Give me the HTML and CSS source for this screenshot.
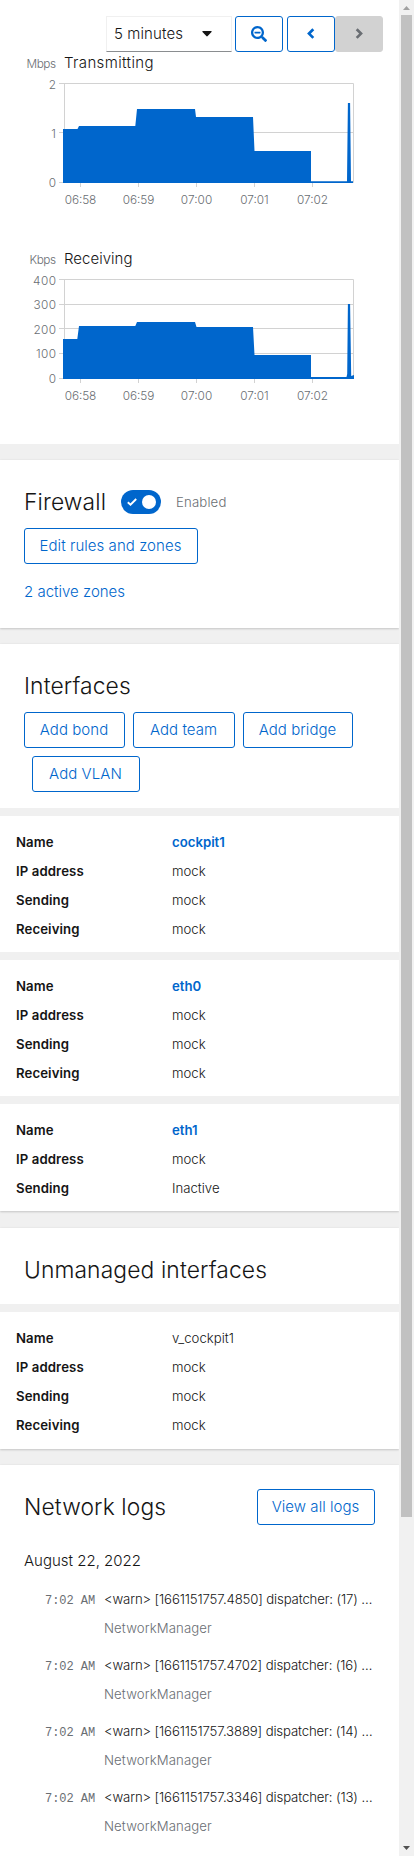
FILE: index.html
```
<!DOCTYPE html>
<html lang="en">
<head>
<meta charset="utf-8">
<title>Networking</title>
<link rel="stylesheet" href="styles.css">
</head>
<body>
<div class="page">
<main class="content">
  <section class="graphs">
    <div class="toolbar">
      <div class="select"><span>5 minutes</span><svg width="10" height="6" viewBox="0 0 10 6"><path d="M1 0h8q1.300 0 .5 1L5.700 5q-.7.8-1.400 0L.5 1Q-.3 0 1 0z" fill="#151515"/></svg></div>
      <button class="btn icon zoom"><svg width="16" height="16" viewBox="0 0 512 512"><path fill="#06c" d="M304 192v32c0 6.600-5.400 12-12 12H124c-6.600 0-12-5.400-12-12v-32c0-6.600 5.400-12 12-12h168c6.600 0 12 5.400 12 12zm201 284.700L476.700 505c-9.400 9.400-24.600 9.400-33.900 0L343 405.300c-4.500-4.500-7-10.600-7-17V372c-35.300 27.600-79.700 44-128 44C93.100 416 0 322.900 0 208S93.100 0 208 0s208 93.100 208 208c0 48.300-16.400 92.700-44 128h16.300c6.400 0 12.500 2.500 17 7l99.700 99.700c9.300 9.400 9.300 24.600 0 34zM344 208c0-75.200-60.800-136-136-136S72 132.800 72 208s60.800 136 136 136 136-60.800 136-136z"/></svg></button>
      <button class="btn icon prev"><svg width="8" height="12" viewBox="0 0 8 12"><path d="M6.300 1.300L2 5.600l4.300 4.300" fill="none" stroke="#06c" stroke-width="2.700"/></svg></button>
      <button class="btn icon off"><svg width="8" height="12" viewBox="0 0 8 12"><path d="M1.700 1.300L6 5.600L1.700 9.900" fill="none" stroke="#6a6e73" stroke-width="2.700"/></svg></button>
    </div>
    <svg class="chart" width="399" height="196" viewBox="0 52 399 196">
      <path class="grid" d="M59 83.500H353.500V182.500M59 132.500H353.500M59 182.500H353.500M64.500 83V183M80.500 183v4M138.500 183v4M196.500 183v4M254.500 183v4M312.500 183v4"/>
      <path class="area" d="M63 183V129H77.500L79 126H135.300L137 109H195L196 117H253L254.500 151H311V181.300H347L347.900 103H350.100L351 181.300H353V183z"/>
      <text class="unit" x="56" y="68" textLength="29.500">Mbps</text>
      <text class="name" x="64" y="68" textLength="89.500">Transmitting</text>
      <g class="ylab"><text x="56" y="89">2</text><text x="56" y="138">1</text><text x="56" y="187">0</text></g>
      <g class="xlab"><text x="80.500" y="204" textLength="31.500">06:58</text><text x="138.500" y="204" textLength="31.500">06:59</text><text x="196.500" y="204" textLength="31.500">07:00</text><text x="254.500" y="204" textLength="28.500">07:01</text><text x="312.500" y="204" textLength="31">07:02</text></g>
    </svg>
    <svg class="chart" width="399" height="196" viewBox="0 248 399 196">
      <path class="grid" d="M59 279.500H353.500V378.500M59 304.500H353.500M59 328.500H353.500M59 353.500H353.500M59 378.500H353.500M64.500 279V379M80.500 379v4M138.500 379v4M196.500 379v4M254.500 379v4M312.500 379v4"/>
      <path class="area" d="M63 379V339H77.300L79 326H135.300L137 322H195L196.500 327H253L254.500 355H311V377H346.500L347.200 374L347.900 304H350.100L351.200 376L354 375V379z"/>
      <text class="unit" x="56" y="264" textLength="26.500">Kbps</text>
      <text class="name" x="64" y="264" textLength="68.500">Receiving</text>
      <g class="ylab"><text x="56" y="285" textLength="23">400</text><text x="56" y="309" textLength="22.500">300</text><text x="56" y="334" textLength="22.500">200</text><text x="56" y="358" textLength="20">100</text><text x="56" y="383">0</text></g>
      <g class="xlab"><text x="80.500" y="400" textLength="31.500">06:58</text><text x="138.500" y="400" textLength="31.500">06:59</text><text x="196.500" y="400" textLength="31.500">07:00</text><text x="254.500" y="400" textLength="28.500">07:01</text><text x="312.500" y="400" textLength="31">07:02</text></g>
    </svg>
  </section>

  <section class="card firewall">
    <div class="head"><h2>Firewall</h2>
      <span class="switch"><svg width="10" height="8" viewBox="0 0 10 8"><path d="M.8 4.200L3.500 6.700L9.200 1" fill="none" stroke="#fff" stroke-width="1.900"/></svg><i class="knob"></i></span>
      <span class="state">Enabled</span></div>
    <button class="btn edit">Edit rules and zones</button>
    <a class="zones">2 active zones</a>
  </section>

  <section class="card">
    <div class="top interfaces">
      <div class="head"><h2>Interfaces</h2></div>
      <div class="actions"><button class="btn bond">Add bond</button><button class="btn team">Add team</button><button class="btn bridge">Add bridge</button><button class="btn vlan">Add VLAN</button></div>
    </div>
    <dl class="item"><dt>Name</dt><dd class="link">cockpit1</dd><dt>IP address</dt><dd>mock</dd><dt>Sending</dt><dd>mock</dd><dt>Receiving</dt><dd>mock</dd></dl>
    <dl class="item"><dt>Name</dt><dd class="link">eth0</dd><dt>IP address</dt><dd>mock</dd><dt>Sending</dt><dd>mock</dd><dt>Receiving</dt><dd>mock</dd></dl>
    <dl class="item"><dt>Name</dt><dd class="link">eth1</dd><dt>IP address</dt><dd>mock</dd><dt>Sending</dt><dd>Inactive</dd></dl>
  </section>

  <section class="card unmanaged">
    <div class="top"><div class="head"><h2>Unmanaged interfaces</h2></div></div>
    <dl class="item"><dt>Name</dt><dd>v_cockpit1</dd><dt>IP address</dt><dd>mock</dd><dt>Sending</dt><dd>mock</dd><dt>Receiving</dt><dd>mock</dd></dl>
  </section>

  <section class="card logs">
    <div class="head"><h2>Network logs</h2><button class="btn view">View all logs</button></div>
    <div class="date">August 22, 2022</div>
    <div class="log"><time>7:02 AM</time><p>&lt;warn&gt; [1661151757.4850] dispatcher: (17) …</p><small>NetworkManager</small></div>
    <div class="log"><time>7:02 AM</time><p>&lt;warn&gt; [1661151757.4702] dispatcher: (16) …</p><small>NetworkManager</small></div>
    <div class="log"><time>7:02 AM</time><p>&lt;warn&gt; [1661151757.3889] dispatcher: (14) …</p><small>NetworkManager</small></div>
    <div class="log"><time>7:02 AM</time><p>&lt;warn&gt; [1661151757.3346] dispatcher: (13) …</p><small>NetworkManager</small></div>
  </section>
</main>
<div class="scrollbar">
  <svg width="15" height="15" viewBox="0 0 15 15"><path d="M4 10L7.500 6L11 10z" fill="#a0a0a0"/></svg>
  <div class="thumb"></div>
  <svg class="down" width="15" height="15" viewBox="0 0 15 15"><path d="M4 5L7.500 9L11 5z" fill="#505050"/></svg>
</div>
</div>
</body>
</html>
```
FILE: styles.css
```
* { box-sizing: border-box; }
body { margin: 0; background: #f0f0f0; color: #151515; font: 300 15px/24px Inter, sans-serif; }
.page { display: flex; width: 414px; height: 1856px; overflow: hidden; }
.content { flex: 0 0 399px; display: flex; flex-direction: column; gap: 16px; }
.graphs { height: 444px; background: #fff; padding-top: 16px; }
.toolbar { display: flex; height: 36px; padding: 0 16px 0 106px; }
.select { width: 126px; margin-right: 3px; padding: 0 19px 0 7px; display: flex; align-items: center; justify-content: space-between; border: 1px solid #f0f0f0; border-bottom-color: #8a8d90; letter-spacing: .1px; }
.btn { height: 36px; padding: 0 1px 0 0; display: flex; align-items: center; justify-content: center; background: #fff; border: 1px solid #06c; border-radius: 3px; color: #06c; font: inherit; letter-spacing: .05px; white-space: nowrap; }
.icon { width: 48px; padding: 0; }
.zoom { margin-right: 4px; }
.off { background: #d2d2d2; border-color: #d2d2d2; }
.chart { display: block; }
.grid { fill: none; stroke: #d2d2d2; }
.area { fill: #06c; }
.unit, .ylab, .xlab { font-size: 11.800px; fill: #6a6e73; }
.unit, .ylab { text-anchor: end; }
.xlab { text-anchor: middle; }
.name { fill: #151515; }
.card { background: #fff; box-shadow: 0 1px 2px rgba(3,3,3,.16), 0 0 2px rgba(3,3,3,.06); }
.firewall { height: 168px; padding: 24px 24px 0; }
.head { display: flex; align-items: center; height: 36px; }
h2 { margin: 0; font-weight: 300; font-size: 22.800px; line-height: 36px; letter-spacing: .13px; white-space: nowrap; }
.switch { display: flex; align-items: center; justify-content: space-between; width: 40px; height: 24px; margin-left: 17px; padding: 0 5px 0 6px; border-radius: 12px; background: #06c; }
.firewall h2 { width: 80px; }
.knob { width: 14px; height: 14px; border-radius: 50%; background: #fff; }
.state { margin-left: 15px; font-size: 13.200px; letter-spacing: .15px; color: #6a6e73; }
.edit { width: 174px; margin-top: 8px; }
.zones { display: block; margin-top: 16px; color: #06c; }
.top { padding: 24px 24px 16px; }
.interfaces { height: 164px; }
.actions { display: flex; flex-wrap: wrap; margin: 8px 0 0 -8px; row-gap: 8px; }
.actions .btn { margin-left: 8px; }
.bond { width: 101px; }
.team { width: 102px; }
.bridge { width: 110px; }
.vlan { width: 108px; }
.actions .vlan { margin-left: 16px; }
.item { display: grid; grid-template-columns: 156px 1fr; grid-auto-rows: 29px; align-items: center; margin: 0; padding: 11px 16px 9px; border-top: 8px solid #f0f0f0; box-sizing: content-box; font-size: 13.200px; }
dt { font-weight: 600; letter-spacing: .1px; }
dd { margin: 0; }
.link { color: #06c; font-weight: 600; }
.unmanaged { padding-bottom: 1px; margin-top: 1px; }
.logs { flex: 1; padding: 24px 24px 0; }
.logs .head { justify-content: space-between; }
.view { width: 118px; }
.date { margin: 24px 0 14px; }
.log { display: grid; grid-template-columns: 50px 1fr; column-gap: 8px; grid-template-rows: 24px 24px; row-gap: 5px; height: 66px; padding-left: 22px; font-size: 13.200px; }
.log p { margin: 0; letter-spacing: -.14px; white-space: nowrap; }
.log small { grid-column: 2; font-size: inherit; letter-spacing: .1px; color: #6a6e73; }
time { font: 12px/24px "Liberation Mono", monospace; letter-spacing: -.05px; padding-top: 2px; margin-left: -1px; color: #6a6e73; white-space: nowrap; }
.scrollbar { width: 15px; display: flex; flex-direction: column; align-items: center; background: #f1f1f1; }
.scrollbar svg { display: block; flex: none; }
.thumb { width: 11px; height: 1502px; background: #c1c1c1; }
.down { margin-top: auto; }
```
